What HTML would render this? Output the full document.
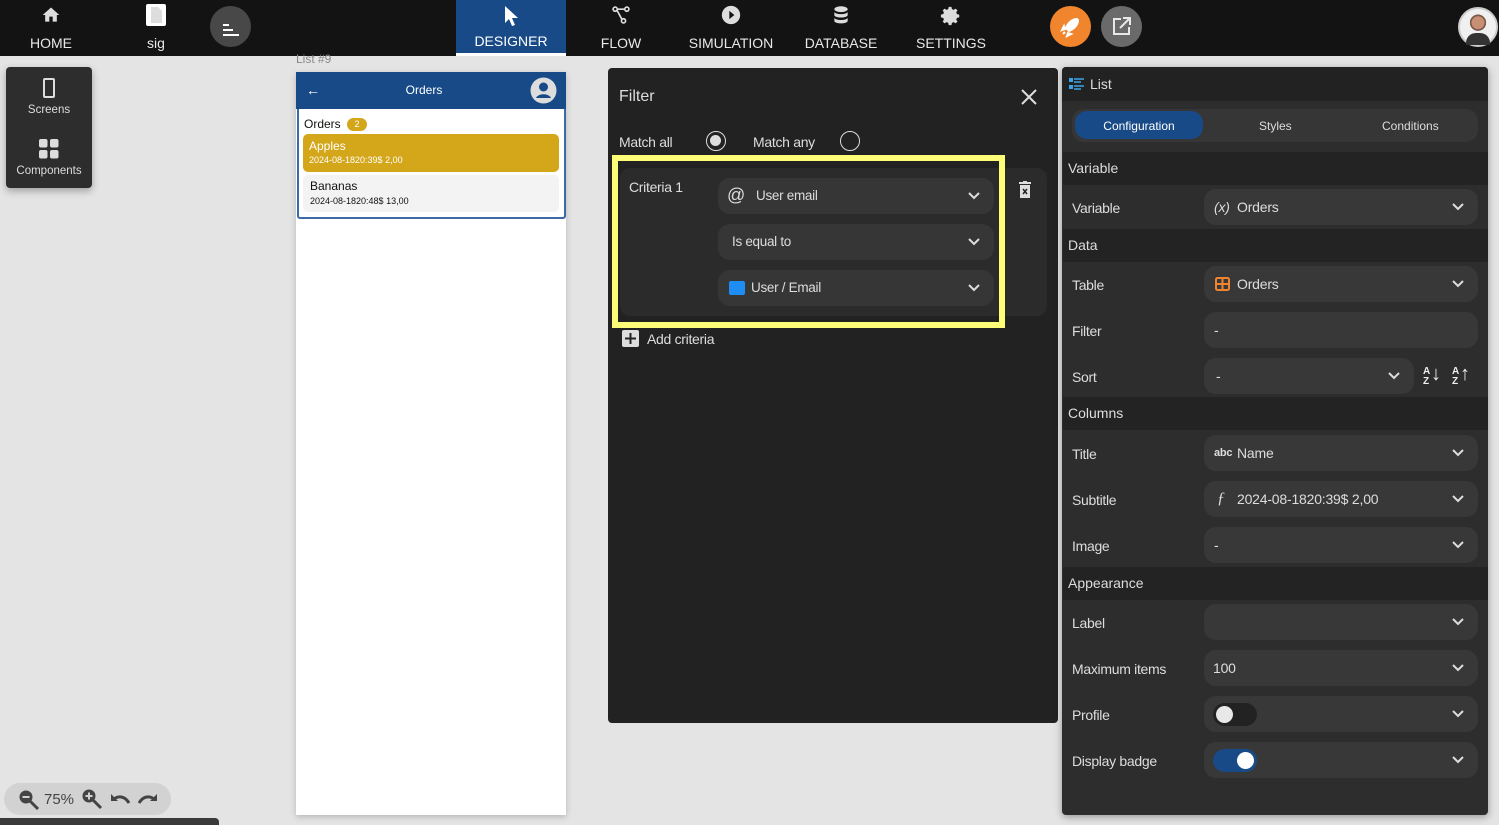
<!DOCTYPE html>
<html><head><meta charset="utf-8"><style>
*{box-sizing:border-box;margin:0;padding:0}
body{width:1499px;height:825px;overflow:hidden;background:#e4e4e4;font-family:"Liberation Sans",sans-serif;position:relative;color:#ddd}
.abs{position:absolute}
.top{left:0;top:0;width:1499px;height:56px;background:#131313}
.nav{position:absolute;top:0;height:56px;text-align:center;color:#e8e8e8;font-size:14px}
.nav .lbl{position:absolute;left:0;right:0;top:35px}
.nav svg{position:absolute;top:5px;left:50%;transform:translateX(-50%)}
.fld{position:absolute;left:1204px;width:274px;height:36px;background:#383838;border-radius:12px;font-size:14px;color:#ddd;line-height:36px;padding-left:33px;letter-spacing:-0.2px}
.lab{position:absolute;left:1072px;font-size:14px;color:#ddd;letter-spacing:-0.3px}
.sec{position:absolute;left:1063px;width:425px;height:33px;background:#232323;font-size:14px;color:#ddd;line-height:33px;padding-left:5px}
.chev{position:absolute;right:14px;top:14px}
.cf{position:absolute;left:718px;width:276px;height:36px;background:#363636;border-radius:12px;font-size:13.5px;color:#ddd;line-height:36px;letter-spacing:-0.3px}
</style></head><body>
<div class="abs top"></div>
<div class="nav" style="left:20px;width:62px"><svg width="20" height="20" viewBox="0 0 24 24"><path d="M10 20v-6h4v6h5v-8h3L12 3 2 12h3v8z" fill="#ddd"/></svg><div class="lbl">HOME</div></div>
<div class="nav" style="left:130px;width:52px"><svg width="24" height="24" viewBox="0 0 24 24" style="top:3px"><rect x="2" y="1" width="20" height="22" rx="2" fill="#fff"/><path d="M7 4h7l4 4v12H7z" fill="#ddd"/></svg><div class="lbl">sig</div></div>
<div class="abs" style="left:210px;top:6px;width:41px;height:41px;border-radius:50%;background:#484848"><div class="abs" style="left:13px;top:18px;width:6px;height:2px;background:#fff"></div><div class="abs" style="left:13px;top:23px;width:10px;height:2px;background:#fff"></div><div class="abs" style="left:13px;top:28px;width:16px;height:2px;background:#fff"></div></div>
<div class="nav" style="left:456px;width:110px;background:#174a87;border-bottom:3px solid #fff"><svg width="18" height="22" viewBox="0 0 18 22" style="left:56px"><path d="M2 1v17l4-4 3 7 3-1-3-7h6z" fill="#fff"/></svg><div class="lbl" style="top:33px;color:#fff">DESIGNER</div></div>
<div class="nav" style="left:590px;width:62px"><svg width="20" height="20" viewBox="0 0 24 24"><circle cx="5" cy="5" r="2.5" stroke="#ddd" stroke-width="2" fill="none"/><circle cx="19" cy="5" r="2.5" stroke="#ddd" stroke-width="2" fill="none"/><circle cx="15" cy="19" r="2.5" stroke="#ddd" stroke-width="2" fill="none"/><path d="M7 6l6 11M8 5h8" stroke="#ddd" stroke-width="2"/></svg><div class="lbl">FLOW</div></div>
<div class="nav" style="left:680px;width:102px"><svg width="20" height="20" viewBox="0 0 24 24"><circle cx="12" cy="12" r="11" fill="#ddd"/><path d="M10 7l6 5-6 5z" fill="#131313"/></svg><div class="lbl">SIMULATION</div></div>
<div class="nav" style="left:800px;width:82px"><svg width="20" height="20" viewBox="0 0 24 24"><ellipse cx="12" cy="5" rx="8" ry="3.5" fill="#ddd"/><path d="M4 8c0 4 16 4 16 0v4c0 4-16 4-16 0zM4 15c0 4 16 4 16 0v4c0 4-16 4-16 0z" fill="#ddd"/></svg><div class="lbl">DATABASE</div></div>
<div class="nav" style="left:912px;width:78px"><svg width="22" height="22" viewBox="0 0 24 24"><path d="M12 8a4 4 0 100 8 4 4 0 000-8zm9 5.5v-3l-2.5-.5-.8-1.9 1.4-2.1-2.1-2.1-2.1 1.4-1.9-.8L12.5 2h-3L9 4.5l-1.9.8-2.1-1.4L2.9 6l1.4 2.1-.8 1.9L1 10.5v3l2.5.5.8 1.9-1.4 2.1L5 20.1l2.1-1.4 1.9.8.5 2.5h3l.5-2.5 1.9-.8 2.1 1.4 2.1-2.1-1.4-2.1.8-1.9z" fill="#ddd"/></svg><div class="lbl">SETTINGS</div></div>
<div class="abs" style="left:1050px;top:6px;width:41px;height:41px;border-radius:50%;background:#f0852d"><svg width="41" height="41" viewBox="0 0 41 41"><path d="M27 13c-5 0-9 4-11 9l3 3c5-2 9-6 9-11zM15 23l-3 1 2-4zM18 27l-1 3 4-2zM13 28l2-2" stroke="#fff" stroke-width="2" fill="#fff"/></svg></div>
<div class="abs" style="left:1101px;top:6px;width:41px;height:41px;border-radius:50%;background:#6a6a6a"><svg width="41" height="41" viewBox="0 0 41 41"><path d="M20 13h-7v15h15v-7M22 12h7v7M29 12l-10 10" stroke="#e8e8e8" stroke-width="2" fill="none"/></svg></div>
<div class="abs" style="left:1458px;top:7px;width:40px;height:40px;border-radius:50%;background:radial-gradient(circle at 50% 38%,#c98f74 0 22%,#7a5a4a 23% 28%,#f0f0f0 29% 100%);border:2px solid #ccc"><div class="abs" style="left:6px;top:24px;width:24px;height:12px;background:#333;border-radius:10px 10px 0 0"></div></div>

<div class="abs" style="left:6px;top:67px;width:86px;height:121px;background:#2d2d2d;border-radius:4px;box-shadow:0 3px 8px rgba(0,0,0,.3);text-align:center;font-size:11.5px;color:#ddd">
<div class="abs" style="left:37px;top:11px;width:12px;height:20px;border:2px solid #ddd;border-radius:2px"></div>
<div class="abs" style="left:0;right:0;top:37px">Screens</div>
<svg class="abs" style="left:33px;top:72px" width="20" height="20" viewBox="0 0 20 20"><rect x="0" y="0" width="8.5" height="8.5" rx="2" fill="#ddd"/><rect x="11" y="0" width="8.5" height="8.5" rx="2" fill="#ddd"/><rect x="0" y="11" width="8.5" height="8.5" rx="2" fill="#ddd"/><rect x="11" y="11" width="8.5" height="8.5" rx="2" fill="#ddd"/></svg>
<div class="abs" style="left:0;right:0;top:98px">Components</div></div>

<div class="abs" style="left:296px;top:52px;font-size:12px;color:#888">List #9</div>
<div class="abs" style="left:296px;top:72px;width:270px;height:743px;background:#fff;box-shadow:0 2px 6px rgba(0,0,0,.2)"></div>
<div class="abs" style="left:296px;top:72px;width:270px;height:37px;background:#174a87;color:#fff;font-size:12px;text-align:center;line-height:37px;padding-right:14px">Orders
<div class="abs" style="left:10px;top:0;font-size:14px">←</div>
<svg class="abs" style="left:234px;top:5px" width="27" height="27" viewBox="0 0 27 27"><circle cx="13.5" cy="13.5" r="13" fill="#ddd"/><circle cx="13.5" cy="10" r="4.5" fill="#174a87"/><path d="M6 21c2-5 13-5 15 0" fill="#174a87"/></svg></div>
<div class="abs" style="left:297px;top:109px;width:269px;height:110px;border:2px solid #3c6aa6;border-top:0;border-radius:0 0 3px 3px"></div>
<div class="abs" style="left:304px;top:117px;font-size:12px;color:#111">Orders</div>
<div class="abs" style="left:347px;top:118px;width:20px;height:13px;background:#d4a61a;border-radius:7px;font-size:9px;color:#fff;text-align:center;line-height:13px">2</div>
<div class="abs" style="left:303px;top:134px;width:256px;height:38px;background:#d4a61a;border-radius:5px;color:#fff;padding:5px 6px;font-size:12px;line-height:14px">Apples<div style="font-size:9px">2024-08-1820:39$ 2,00</div></div>
<div class="abs" style="left:303px;top:175px;width:256px;height:37px;background:#f3f3f3;border-radius:5px;color:#111;padding:4px 7px;font-size:12px;line-height:15px">Bananas<div style="font-size:9px">2024-08-1820:48$ 13,00</div></div>

<div class="abs" style="left:608px;top:68px;width:450px;height:655px;background:#222;border-radius:4px"></div>
<div class="abs" style="left:619px;top:88px;font-size:16px;color:#ddd">Filter</div>
<svg class="abs" style="left:1020px;top:88px" width="18" height="18" viewBox="0 0 18 18"><path d="M2 2l14 14M16 2L2 16" stroke="#ddd" stroke-width="2"/></svg>
<div class="abs" style="left:619px;top:134px;font-size:14px;letter-spacing:-0.3px">Match all</div>
<div class="abs" style="left:706px;top:131px;width:20px;height:20px;border:1.5px solid #ddd;border-radius:50%"><div class="abs" style="left:3px;top:3px;width:11px;height:11px;background:#ddd;border-radius:50%"></div></div>
<div class="abs" style="left:753px;top:134px;font-size:14px;letter-spacing:-0.3px">Match any</div>
<div class="abs" style="left:840px;top:131px;width:20px;height:20px;border:1.5px solid #ddd;border-radius:50%"></div>
<div class="abs" style="left:620px;top:168px;width:427px;height:148px;background:#2b2b2b;border-radius:10px"></div>
<div class="abs" style="left:612px;top:155px;width:393px;height:173px;border:6px solid #fdfd78"></div>
<div class="abs" style="left:629px;top:179px;font-size:14px;letter-spacing:-0.3px">Criteria 1</div>
<div class="cf" style="top:178px;padding-left:38px"><span class="abs" style="left:9px;top:-1px;font-size:18px">@</span>User email<svg class="chev" width="12" height="8" viewBox="0 0 12 8"><path d="M1 1l5 5 5-5" stroke="#ddd" stroke-width="2" fill="none"/></svg></div>
<div class="cf" style="top:224px;padding-left:14px">Is equal to<svg class="chev" width="12" height="8" viewBox="0 0 12 8"><path d="M1 1l5 5 5-5" stroke="#ddd" stroke-width="2" fill="none"/></svg></div>
<div class="cf" style="top:270px;padding-left:33px"><span class="abs" style="left:11px;top:11px;width:16px;height:14px;background:#1e8ef5;border-radius:2px"></span>User / Email<svg class="chev" width="12" height="8" viewBox="0 0 12 8"><path d="M1 1l5 5 5-5" stroke="#ddd" stroke-width="2" fill="none"/></svg></div>
<svg class="abs" style="left:1018px;top:181px" width="14" height="18" viewBox="0 0 14 18"><path d="M1 2h12M5 1h4" stroke="#ddd" stroke-width="2"/><rect x="2" y="4" width="10" height="13" fill="#ddd"/><path d="M5 8l4 5M9 8l-4 5" stroke="#222" stroke-width="1.5"/></svg>
<div class="abs" style="left:622px;top:330px;width:17px;height:17px;background:#ddd;border-radius:2px"><svg width="17" height="17"><path d="M8.5 3v11M3 8.5h11" stroke="#222" stroke-width="2"/></svg></div>
<div class="abs" style="left:647px;top:331px;font-size:14px;letter-spacing:-0.3px">Add criteria</div>

<div class="abs" style="left:1062px;top:67px;width:426px;height:748px;background:#2d2d2d;border-radius:4px;box-shadow:0 2px 8px rgba(0,0,0,.35)"></div>
<div class="abs" style="left:1062px;top:67px;width:426px;height:34px;background:#222;border-radius:4px 4px 0 0;font-size:14px;line-height:34px;padding-left:28px">List</div>
<svg class="abs" style="left:1069px;top:78px" width="16" height="13" viewBox="0 0 16 13"><rect x="0" y="0" width="4" height="4" fill="#3ca3e8"/><rect x="0" y="7" width="4" height="4" fill="#3ca3e8"/><path d="M5 1h10M5 4h7M5 8h10M5 11h7" stroke="#3ca3e8" stroke-width="1.5"/></svg>
<div class="abs" style="left:1072px;top:109px;width:406px;height:33px;background:#363636;border-radius:12px;font-size:12px"></div>
<div class="abs" style="left:1075px;top:111px;width:128px;height:28px;background:#174a87;border-radius:12px;font-size:12px;color:#fff;text-align:center;line-height:30px">Configuration</div>
<div class="abs" style="left:1259px;top:119px;font-size:12px">Styles</div>
<div class="abs" style="left:1382px;top:119px;font-size:12px">Conditions</div>
<div class="sec" style="top:152px">Variable</div>
<div class="sec" style="top:229px">Data</div>
<div class="sec" style="top:397px">Columns</div>
<div class="sec" style="top:567px">Appearance</div>

<div class="lab" style="top:200px">Variable</div><div class="fld" style="top:189px"><span class="abs" style="left:10px;font-style:italic">(x)</span>Orders<svg class="chev" width="12" height="8" viewBox="0 0 12 8"><path d="M1 1l5 5 5-5" stroke="#ddd" stroke-width="2" fill="none"/></svg></div>
<div class="lab" style="top:277px">Table</div><div class="fld" style="top:266px"><svg class="abs" style="left:11px;top:11px" width="15" height="14" viewBox="0 0 15 14"><rect x="1" y="1" width="13" height="12" rx="1.5" stroke="#f0852d" stroke-width="2" fill="none"/><path d="M1 7h13M7.5 1v12" stroke="#f0852d" stroke-width="2"/></svg>Orders<svg class="chev" width="12" height="8" viewBox="0 0 12 8"><path d="M1 1l5 5 5-5" stroke="#ddd" stroke-width="2" fill="none"/></svg></div>
<div class="lab" style="top:323px">Filter</div><div class="fld" style="top:312px;padding-left:10px">-</div>
<div class="lab" style="top:369px">Sort</div><div class="fld" style="top:358px;width:210px;padding-left:12px">-<svg class="chev" width="12" height="8" viewBox="0 0 12 8"><path d="M1 1l5 5 5-5" stroke="#ddd" stroke-width="2" fill="none"/></svg></div>
<div class="abs" style="left:1423px;top:367px;font-size:10px;font-weight:bold;line-height:10px;color:#eee">A<br>Z</div><div class="abs" style="left:1431px;top:363px;font-size:20px;color:#eee">↓</div>
<div class="abs" style="left:1452px;top:367px;font-size:10px;font-weight:bold;line-height:10px;color:#eee">A<br>Z</div><div class="abs" style="left:1460px;top:363px;font-size:20px;color:#eee">↑</div>
<div class="lab" style="top:446px">Title</div><div class="fld" style="top:435px"><span class="abs" style="left:10px;font-size:11px;font-weight:bold">abc</span>Name<svg class="chev" width="12" height="8" viewBox="0 0 12 8"><path d="M1 1l5 5 5-5" stroke="#ddd" stroke-width="2" fill="none"/></svg></div>
<div class="lab" style="top:492px">Subtitle</div><div class="fld" style="top:481px"><span class="abs" style="left:13px;font-style:italic;font-family:'Liberation Serif',serif;font-size:16px">ƒ</span>2024-08-1820:39$ 2,00<svg class="chev" width="12" height="8" viewBox="0 0 12 8"><path d="M1 1l5 5 5-5" stroke="#ddd" stroke-width="2" fill="none"/></svg></div>
<div class="lab" style="top:538px">Image</div><div class="fld" style="top:527px;padding-left:10px">-<svg class="chev" width="12" height="8" viewBox="0 0 12 8"><path d="M1 1l5 5 5-5" stroke="#ddd" stroke-width="2" fill="none"/></svg></div>
<div class="lab" style="top:615px">Label</div><div class="fld" style="top:604px"><svg class="chev" width="12" height="8" viewBox="0 0 12 8"><path d="M1 1l5 5 5-5" stroke="#ddd" stroke-width="2" fill="none"/></svg></div>
<div class="lab" style="top:661px">Maximum items</div><div class="fld" style="top:650px;padding-left:9px">100<svg class="chev" width="12" height="8" viewBox="0 0 12 8"><path d="M1 1l5 5 5-5" stroke="#ddd" stroke-width="2" fill="none"/></svg></div>
<div class="lab" style="top:707px">Profile</div><div class="fld" style="top:696px"><div class="abs" style="left:9px;top:7px;width:44px;height:23px;background:#222;border-radius:12px"><div class="abs" style="left:3px;top:3px;width:17px;height:17px;background:#e8e8e8;border-radius:50%"></div></div><svg class="chev" width="12" height="8" viewBox="0 0 12 8"><path d="M1 1l5 5 5-5" stroke="#ddd" stroke-width="2" fill="none"/></svg></div>
<div class="lab" style="top:753px">Display badge</div><div class="fld" style="top:742px"><div class="abs" style="left:9px;top:7px;width:44px;height:23px;background:#174a87;border-radius:12px"><div class="abs" style="left:24px;top:3px;width:17px;height:17px;background:#fff;border-radius:50%"></div></div><svg class="chev" width="12" height="8" viewBox="0 0 12 8"><path d="M1 1l5 5 5-5" stroke="#ddd" stroke-width="2" fill="none"/></svg></div>

<div class="abs" style="left:4px;top:783px;width:167px;height:32px;background:#d2d2d2;border-radius:16px;color:#444;font-size:15px">
<svg class="abs" style="left:14px;top:6px" width="22" height="22" viewBox="0 0 22 22"><circle cx="8" cy="8" r="6.5" fill="#444"/><path d="M12 12l8 8" stroke="#444" stroke-width="3"/><path d="M4.5 8h7" stroke="#d2d2d2" stroke-width="2"/></svg>
<span class="abs" style="left:40px;top:8px">75%</span>
<svg class="abs" style="left:77px;top:5px" width="22" height="22" viewBox="0 0 22 22"><circle cx="8" cy="8" r="6.5" fill="#444"/><path d="M12 12l8 8" stroke="#444" stroke-width="3"/><path d="M4.5 8h7M8 4.5v7" stroke="#d2d2d2" stroke-width="2"/></svg>
<svg class="abs" style="left:104px;top:8px" width="24" height="16" viewBox="0 0 24 16"><path d="M3 3v7h7z" fill="#444"/><path d="M5 9c5-5 12-4 16 3" stroke="#444" stroke-width="3" fill="none"/></svg>
<svg class="abs" style="left:132px;top:8px" width="24" height="16" viewBox="0 0 24 16"><path d="M21 3v7h-7z" fill="#444"/><path d="M19 9c-5-5-12-4-16 3" stroke="#444" stroke-width="3" fill="none"/></svg></div>
<div class="abs" style="left:0;top:818px;width:219px;height:7px;background:#3a3a3a;border-radius:0 4px 0 0"></div>
</body></html>
